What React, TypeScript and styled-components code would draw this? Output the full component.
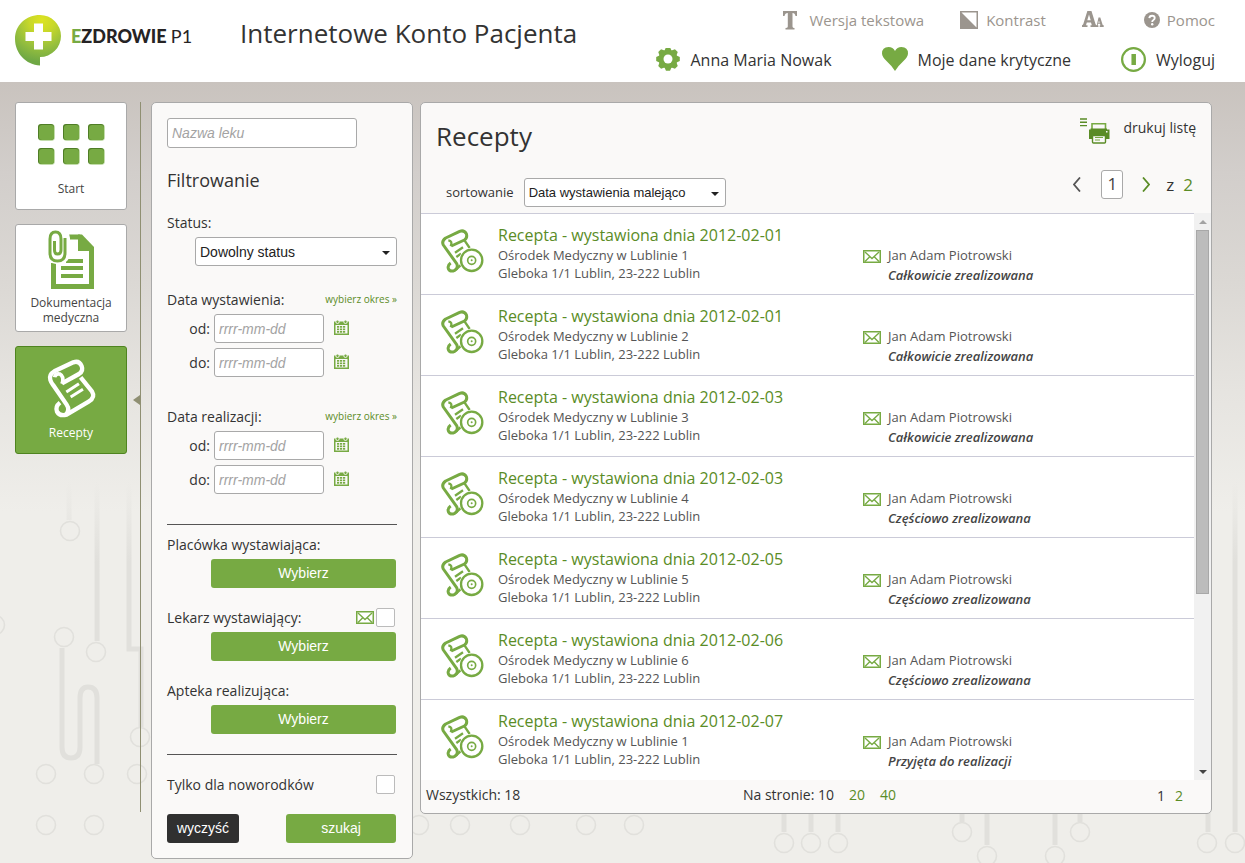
import React, { useState } from "react";
import styled, { createGlobalStyle } from "styled-components";

const GREEN = "#77aa43";
const LINK = "#5a8c26";
const BORDER = "#a9a9a9";
const SANS = `"Open Sans", "Noto Sans", sans-serif`;
const ARIAL = `"Liberation Sans", Arial, sans-serif`;

const GlobalStyle = createGlobalStyle`
  *, *::before, *::after { box-sizing: border-box; }
  body {
    margin: 0;
    background: #efeeea;
    color: #333;
    font-family: ${SANS};
    font-size: 14px;
  }
  a { color: inherit; text-decoration: none; }
  button { cursor: pointer; }
  h1, h2, h3, p, ul { margin: 0; padding: 0; font-weight: 400; }
  ul { list-style: none; }
  svg { display: block; flex: none; }
`;

/* ---------- header ---------- */

const Header = styled.header`
  display: flex;
  height: 82px;
  padding: 0 30px 0 15px;
  background: #fff;
`;

const Brand = styled.a`
  display: flex;
  align-items: center;
  gap: 10px;
  width: 225px;
  height: 80px;
  color: #262324;
  font-size: 18px;
  white-space: nowrap;
`;

const BrandName = styled.span`
  font-family: Lato, sans-serif;
  font-weight: 900;
  padding-bottom: 8px;
  em { font-style: normal; color: ${GREEN}; }
  small { font-size: 18px; font-weight: 400; }
`;

const SiteTitle = styled.h1`
  flex: 1;
  font-size: 26px;
  line-height: 66px;
  white-space: nowrap;
`;

const HeaderLinks = styled.div`
  display: flex;
  flex-direction: column;
  align-items: flex-end;
`;

const TopLinks = styled.nav`
  display: flex;
  height: 40px;
  color: #9b958e;
  font-size: 15px;
  line-height: 40px;
`;

const UserLinks = styled(TopLinks)`
  color: #333;
  font-size: 16px;
`;

const IconLink = styled.a<{ $gap?: number; $before?: number }>`
  display: flex;
  align-items: center;
  gap: ${(p) => p.$gap ?? 10}px;
  margin-left: ${(p) => p.$before ?? 36}px;
  white-space: nowrap;
`;

/* ---------- page ---------- */

const Main = styled.main`
  position: relative;
  display: flex;
  align-items: flex-start;
  gap: 7px;
  min-height: calc(100vh - 82px);
  padding: 20px 33px 4px 15px;
  overflow: hidden;
  background: linear-gradient(#c9c3be, #d2cecb 90px, #dbd8d4 200px, #e6e4e0 310px, #efeeea 430px);
`;

const Backdrop = styled.svg`
  position: absolute;
  top: 0;
  left: 0;
`;

const SideNav = styled.nav`
  position: relative;
  display: flex;
  flex-direction: column;
  gap: 14px;
  width: 126px;
  height: 710px;
  margin-right: 3px;
  border-right: 1px solid #8f8f72;
`;

const Tile = styled.a<{ $active?: boolean }>`
  position: relative;
  width: 112px;
  height: 108px;
  border: 1px solid ${(p) => (p.$active ? "#4f8420" : BORDER)};
  border-radius: 3px;
  background: ${(p) => (p.$active ? GREEN : "#fff")};
  color: ${(p) => (p.$active ? "#fff" : "#444")};
  font-size: 12px;
  line-height: 15px;
  text-align: center;
`;

const TileLabel = styled.span`
  display: flex;
  align-items: center;
  justify-content: center;
  height: 30px;
  padding: 0 10px;
`;

const ActiveMark = styled.span`
  position: absolute;
  top: 48px;
  left: 117px;
  border: 5px solid transparent;
  border-left-width: 0;
  border-right: 7px solid #8f8f72;
`;

const Panel = styled.section`
  position: relative;
  border: 1px solid ${BORDER};
  border-radius: 5px;
  background: #faf9f8;
`;

/* ---------- filters ---------- */

const FilterPanel = styled(Panel)`
  flex: none;
  width: 262px;
  padding: 15px;
`;

const Field = styled.input`
  display: block;
  height: 29px;
  padding: 0 4px;
  border: 1px solid ${BORDER};
  border-radius: 3px;
  background: #fff;
  font: 14px ${ARIAL};
  &::placeholder { color: #a3a3a3; font-style: italic; opacity: 1; }
`;

const DrugField = styled(Field)`
  width: 190px;
  height: 30px;
`;

const FilterTitle = styled.h2`
  margin: 19px 0 16px;
  font-size: 18px;
  line-height: 26px;
`;

const SelectBox = styled.span`
  position: relative;
  display: block;
  width: 202px;
  svg { position: absolute; right: 7px; top: 50%; margin-top: -1px; pointer-events: none; }
`;

const Select = styled.select<{ $size: number }>`
  display: block;
  width: 100%;
  height: 29px;
  padding: 0 4px;
  border: 1px solid ${BORDER};
  border-radius: 3px;
  background: #fff;
  color: #222;
  font: ${(p) => p.$size}px ${ARIAL};
  appearance: none;
`;

const FilterLine = styled.div`
  display: flex;
  align-items: center;
  justify-content: space-between;
  height: 28px;
  padding-bottom: 2px;
  label { flex: 1; }
`;

const NewbornLine = styled(FilterLine)`
  margin-top: 16px;
  padding-right: 1px;
`;

const StatusRow = styled.div`
  display: flex;
  justify-content: flex-end;
  margin-bottom: 20px;
`;

const PeriodLink = styled.a`
  color: ${LINK};
  font-size: 10px;
`;

const DateGroup = styled.div`
  display: flex;
  flex-direction: column;
  gap: 5px;
  margin-bottom: 26px;
`;

const DateRow = styled.div`
  display: flex;
  align-items: center;
  gap: 4px;
  label { width: 43px; text-align: right; }
  input { width: 110px; }
`;

const IconButton = styled.button`
  display: flex;
  margin-left: 6px;
  padding: 0 0 2px;
  border: 0;
  background: none;
`;

const Rule = styled.hr`
  height: 1px;
  margin: 30px 0 6px;
  border: 0;
  background: #555;
`;

const Button = styled.button<{ $width: number; $dark?: boolean }>`
  display: block;
  width: ${(p) => p.$width}px;
  height: 29px;
  padding: 0 0 1px;
  border: 0;
  border-radius: 3px;
  background: ${(p) => (p.$dark ? "#303030" : GREEN)};
  color: #fff;
  font: 14px ${ARIAL};
`;

const Choices = styled.div`
  display: flex;
  flex-direction: column;
  gap: 16px;
  margin-bottom: 20px;
`;

const Choice = styled.div`
  display: flex;
  flex-direction: column;
  align-items: flex-end;
  padding-right: 1px;
  ${FilterLine} { align-self: stretch; }
`;

const Check = styled.input`
  appearance: none;
  width: 19px;
  height: 19px;
  margin: 0 1px 0 2px;
  border: 1px solid #bbb;
  border-radius: 2px;
  background: #fff;
  &:checked { background: ${GREEN}; }
`;

const Actions = styled.div`
  display: flex;
  justify-content: space-between;
  padding: 15px 1px 0 0;
`;

/* ---------- list ---------- */

const ListPanel = styled(Panel)`
  flex: 1;
  min-width: 0;
`;

const ListHead = styled.div`
  display: flex;
  flex-direction: column;
  justify-content: space-between;
  height: 110px;
  padding: 14px 15px 6px;
`;

const HeadRow = styled.div`
  display: flex;
  align-items: flex-start;
  justify-content: space-between;
`;

const SortRow = styled(HeadRow)`
  align-items: flex-end;
`;

const ListTitle = styled.h2`
  font-size: 26px;
  line-height: 38px;
`;

const PrintLink = styled.a`
  display: flex;
  gap: 13px;
  line-height: 22px;
  svg { margin-top: 1px; }
`;

const SortField = styled.div`
  display: flex;
  align-items: center;
  gap: 10px;
  padding-left: 10px;
  font-size: 13px;
  label { padding-bottom: 2px; }
`;

const Pager = styled.div`
  display: flex;
  align-items: center;
  margin-bottom: 8px;
  padding-right: 3px;
  font-size: 17px;
  line-height: 28px;
  a { color: ${LINK}; }
`;

const PageInput = styled.input`
  width: 22px;
  height: 29px;
  margin: 0 19px 0 20px;
  padding: 0 0 2px;
  border: 1px solid ${BORDER};
  border-radius: 3px;
  background: #fff;
  color: #444;
  font: 17px ${SANS};
  text-align: center;
`;

const PageTotal = styled.span`
  margin: 0 9px 0 16px;
`;

const Scroller = styled.div`
  display: flex;
`;

const Rows = styled.ul`
  flex: 1;
  min-width: 0;
  background: #fff;
`;

const Row = styled.li`
  display: flex;
  height: 81px;
  padding: 10px 0 0 20px;
  border-top: 1px solid #cbcbd8;
  color: #555;
  font-size: 13px;
  line-height: 18px;
`;

const RowIcon = styled.div`
  padding-top: 5px;
`;

const RowMain = styled.div`
  flex: 1;
  padding-left: 14px;
`;

const RowTitle = styled.h3`
  color: ${LINK};
  font-size: 16px;
  line-height: 22px;
`;

const RowDoctor = styled.div`
  display: flex;
  gap: 7px;
  width: 331px;
  padding-top: 22px;
  svg { margin-top: 4px; }
  strong { display: block; color: #444; font-weight: 600; font-style: italic; line-height: 22px; }
`;

const Track = styled.div`
  display: flex;
  flex-direction: column;
  align-items: center;
  width: 17px;
  background: #f1f1f1;
`;

const TrackButton = styled.button`
  display: flex;
  align-items: center;
  justify-content: center;
  width: 17px;
  height: 17px;
  padding: 0;
  border: 0;
  background: none;
`;

const Thumb = styled.div`
  width: 13px;
  height: 364px;
  margin-bottom: auto;
  border: 1px solid #a8a8a8;
  background: #bcbcbc;
`;

const ListFoot = styled.footer`
  display: grid;
  grid-template-columns: 1fr auto 1fr;
  height: 33px;
  padding: 0 28px 0 5px;
  line-height: 30px;
  a { color: ${LINK}; }
`;

const PageSizes = styled.div`
  display: flex;
  gap: 15px;
  padding-left: 30px;
`;

const PageLinks = styled.div`
  display: flex;
  justify-content: flex-end;
  gap: 10px;
  line-height: 32px;
`;

/* ---------- drawings ---------- */

const Logo = () => (
  <svg width="46" height="52" viewBox="0 0 46 52" aria-hidden="true">
    <defs>
      <radialGradient id="lg" gradientUnits="userSpaceOnUse" cx="27" cy="6" r="42">
        <stop offset="0" stopColor="#dde321" />
        <stop offset="0.3" stopColor="#c8d829" />
        <stop offset="0.65" stopColor="#98c03d" />
        <stop offset="1" stopColor="#6fa844" />
      </radialGradient>
    </defs>
    <path d="M25 1a21 21 0 0 1 0 42V51.500C11 51 0 39 0 25C0 11 11 1 25 1z" fill="url(#lg)" />
    <path d="M19 9.500h9v8.500h8.500v9H28v8.500h-9V27h-8.500v-9H19z" fill="#fff" />
  </svg>
);

const TextIcon = () => (
  <svg width="16" height="19" viewBox="0 0 16 19" fill="#9b958e" aria-hidden="true">
    <path d="M0 0h14v5h-1.500Q12 2 9.500 2V15.500Q9.500 17 11.500 17V18.500h-9V17Q4.800 17 4.800 15.500V2Q2 2 1.500 5H0z" />
  </svg>
);

const ContrastIcon = () => (
  <svg width="18" height="18" viewBox="0 0 18 18" aria-hidden="true">
    <rect x="0.750" y="0.750" width="16.500" height="16.500" fill="#fff" stroke="#9b958e" strokeWidth="1.500" />
    <path d="M0 0L18 18H0z" fill="#9b958e" />
  </svg>
);

const FontIcon = () => (
  <svg width="22" height="19" viewBox="0 2 22 19" fill="#9b958e" fillRule="evenodd" aria-hidden="true">
    <path d="M5.500 1.500h3.800l4.200 13.500q.3 1 1.200 1.200V18H8.500V16.300h1.300L9 13.500H4.800L4 16.300h1.500v1.700H0V16.300q1-.2 1.300-1.300zM7 5.500L5.300 11.200h3.400z" />
    <path d="M16.500 8.500h1.800l2.400 7.500 1 .3v1.700h-4v-1.500l.7-.2-.4-1.500h-2l-.3 1.500.7.200v1.500H14v-1.500l.8-.3zM17 11.500l-.7 2.200h1.400z" />
  </svg>
);

const HelpIcon = () => (
  <svg width="16" height="16" viewBox="0 0 16 16" fill="none" aria-hidden="true">
    <circle cx="8" cy="8" r="8" fill="#9b958e" />
    <path d="M5.300 6.200Q5.500 3.700 8.100 3.700T10.700 6Q10.700 7.200 9.400 8Q8.200 8.700 8.200 10" stroke="#fff" strokeWidth="1.900" />
    <circle cx="8.200" cy="12.300" r="1.200" fill="#fff" />
  </svg>
);

const GearIcon = () => (
  <svg width="24" height="24" viewBox="-12 -11 24 24" aria-hidden="true">
    {[0, 45, 90, 135].map((a) => (
      <path key={a} d="M-3.500 -8.500L-2 -11.800H2L3.500 -8.500V8.500L2 11.800H-2L-3.500 8.500z" fill={GREEN} transform={`rotate(${a})`} />
    ))}
    <circle r="9.300" fill={GREEN} />
    <circle r="4.500" fill="#fff" />
  </svg>
);

const HeartIcon = () => (
  <svg width="26" height="24" viewBox="0 1 26 24" overflow="visible" fill={GREEN} aria-hidden="true">
    <path d="M13 24Q10 19 5 14.500Q0 10 0 6.500Q0 0 6.500 0Q11 0 13 4Q15 0 19.500 0Q26 0 26 6.500Q26 10 21 14.500Q16 19 13 24z" />
  </svg>
);

const PowerIcon = () => (
  <svg width="25" height="25" viewBox="0 1 25 25" overflow="visible" fill="none" aria-hidden="true">
    <circle cx="12.500" cy="12.500" r="11.400" stroke={GREEN} strokeWidth="2.200" />
    <path d="M12.700 7v11" stroke={GREEN} strokeWidth="4.500" />
  </svg>
);

const StartIcon = () => (
  <svg width="110" height="70" aria-hidden="true">
    {[22, 47, 72].map((x) =>
      [21, 45].map((y) => (
        <g key={`${x}-${y}`}>
          <rect x={x} y={y} width="17" height="17" rx="4" fill="#c2dcaa" />
          <rect x={x} y={y} width="16" height="16" rx="3" fill="#4f7d26" />
          <rect x={x + 1} y={y + 1} width="15" height="15" rx="3" fill={GREEN} />
        </g>
      ))
    )}
  </svg>
);

const DocumentIcon = () => (
  <svg width="110" height="70" fill="none" aria-hidden="true">
    <path d="M53 12H63L75.500 24V61.500H37.500V38" stroke={GREEN} strokeWidth="5" />
    <path d="M62 9.500H66L78 22V26H62z" fill={GREEN} />
    <path d="M45 43H67M45 51H67M50 36H67" stroke={GREEN} strokeWidth="4" />
    <rect x="30" y="3" width="24" height="36" rx="10" fill="#fff" />
    <path d="M49 13V28Q49 36 41.500 36Q34 36 34 28V14Q34 7 39.500 7Q45 7 45 14V25Q45 29 41.500 29Q38.500 29 38.500 25V16" stroke={GREEN} strokeWidth="3" />
  </svg>
);

const ScrollIcon = () => (
  <svg width="110" height="70" overflow="visible" fill="none" stroke="#fff" strokeLinejoin="round" aria-hidden="true">
    <g transform="translate(28 9) scale(0.333)" strokeWidth="13">
      <path d="M54 82L105 54Q119 45 113 30Q106 13 88 19L31 46Q14 56 19 72Q21 79 28 88L68 146Q79 162 66 176" />
      <path d="M54 84Q62 62 47 54Q34 52 32 64" strokeWidth="11" />
      <path d="M48 140Q33 152 39 167Q47 182 68 176L134 137Q155 124 144 106L110 64" />
      <path d="M67 108L105 83M80 123L117 100" strokeWidth="9" />
    </g>
  </svg>
);

const RecipeIcon = () => (
  <svg width="43" height="44" viewBox="0 0 129 132" fill="none" stroke={GREEN} strokeLinejoin="round" aria-hidden="true">
    <path d="M31 51L70 33Q80 27 76 14Q69 2 56 7L14 27Q1 36 7 48L47 104Q53 118 41 124Q28 130 22 119Q19 109 29 102" strokeWidth="9" />
    <path d="M29 52Q36 36 22 34" strokeWidth="7" />
    <path d="M71 35L86 57M42 71L66 55M46 84L60 74M44 122L60 108" strokeWidth="7" />
    <circle cx="92" cy="94" r="37" fill="#fff" stroke="none" />
    <circle cx="92" cy="94" r="32" strokeWidth="7" />
    <circle cx="92" cy="94" r="12" strokeWidth="5" />
    <circle cx="92" cy="94" r="3" fill={GREEN} stroke="none" />
  </svg>
);

const MailIcon = () => (
  <svg width="18" height="13" viewBox="0 0 18 13" fill="none" stroke={GREEN} aria-hidden="true">
    <rect x="0.750" y="0.750" width="16.500" height="11.500" fill="#fff" strokeWidth="1.500" />
    <path d="M2 2L9 8.500L16 2M2 11.500L6.500 7M16 11.500L11.500 7" strokeWidth="1.400" />
  </svg>
);

const CalendarIcon = () => (
  <svg width="15" height="15" viewBox="0 0 15 15" aria-hidden="true">
    <path d="M0 1.500H15V15H0z" fill={GREEN} />
    <path d="M1.500 5H13.500V13.500H1.500z" fill="#faf9f8" />
    <circle cx="3.500" cy="1.800" r="1.700" fill={GREEN} stroke="#faf9f8" strokeWidth="0.900" />
    <circle cx="11.500" cy="1.800" r="1.700" fill={GREEN} stroke="#faf9f8" strokeWidth="0.900" />
    {[3, 6, 9].map((x) => [6, 8.500, 11].map((y) => <rect key={`${x}${y}`} x={x} y={y} width="2.200" height="1.700" fill={GREEN} />))}
  </svg>
);

const PrinterIcon = () => (
  <svg width="30" height="26" viewBox="0 0 30 26" fill="none" aria-hidden="true">
    <path d="M0 1H7M0 4.300H7M0 7.600H7" stroke={LINK} strokeWidth="1.400" />
    <path d="M12 12V5.700H25.500V12" stroke={GREEN} strokeWidth="1.600" />
    <path d="M9 11.500h1.500v-1h16.500v1h2.500V21H9z" fill={LINK} />
    <rect x="12.500" y="17.500" width="13" height="7.500" rx="1" fill="#faf9f8" stroke={LINK} strokeWidth="1.400" />
    <path d="M15 19.500h8M15 22h5" stroke={GREEN} strokeWidth="1.200" />
    <rect x="26" y="13" width="1.500" height="1.500" fill="#faf9f8" />
  </svg>
);

const CaretIcon = ({ up, color = "#222" }: { up?: boolean; color?: string }) => (
  <svg width="8" height="4" viewBox="0 0 8 4" aria-hidden="true">
    <path d={up ? "M0 4L4 0L8 4z" : "M0 0H8L4 4z"} fill={color} />
  </svg>
);

const Chevron = ({ right }: { right?: boolean }) => (
  <svg width="8" height="15" viewBox="0 0 8 15" fill="none" aria-hidden="true">
    <path d={right ? "M1 0.500L7 7.500L1 14.500" : "M7 0.500L1 7.500L7 14.500"} stroke={right ? LINK : "#555"} strokeWidth="1.800" />
  </svg>
);

const RINGS = [
  [70, 449], [-5, 543], [64, 555], [96, 570], [140, 655], [46, 692], [94, 692], [137, 692],
  [46, 743], [94, 743], [419, 743], [460, 743], [520, 743], [586, 743], [634, 743],
  [784, 761], [811, 761], [838, 761], [962, 750], [987, 774], [1055, 774], [1080, 750], [1207, 761], [1235, 761],
];

const Circuit = () => (
  <Backdrop width="100%" height="781" fill="none" stroke="#e1e0dc" aria-hidden="true">
    <defs>
      <linearGradient id="fade" gradientUnits="userSpaceOnUse" x1="0" y1="400" x2="0" y2="480">
        <stop offset="0" stopColor="#e1e0dc" stopOpacity="0" />
        <stop offset="1" stopColor="#e1e0dc" />
      </linearGradient>
    </defs>
    <g strokeWidth="5">
      <path stroke="url(#fade)" d="M97 400L97.100 559M129 400V567H141V645M69 400L69.100 438M1235 400L1235.100 750" />
      <path d="M62 566V665Q62 676 71 676Q80 676 80 665V616Q80 605 88 605Q97 605 97 616V682" />
      <path d="M784 730V750M811 730V750M838 730V750M962 730V740M987 730V763M1055 730V763M1080 730V740M1208 730V750" />
    </g>
    {RINGS.map(([x, y]) => (
      <circle key={`${x}-${y}`} cx={x} cy={y} r="9.500" strokeWidth="1.600" fill="#efeeea" />
    ))}
  </Backdrop>
);

/* ---------- page parts ---------- */

const ROWS = [
  ["2012-02-01", "1", "Całkowicie zrealizowana"],
  ["2012-02-01", "2", "Całkowicie zrealizowana"],
  ["2012-02-03", "3", "Całkowicie zrealizowana"],
  ["2012-02-03", "4", "Częściowo zrealizowana"],
  ["2012-02-05", "5", "Częściowo zrealizowana"],
  ["2012-02-06", "6", "Częściowo zrealizowana"],
  ["2012-02-07", "1", "Przyjęta do realizacji"],
];

const DateRange = ({ id, title }: { id: string; title: string }) => (
  <>
    <FilterLine>
      <span>{title}</span>
      <PeriodLink href="#okres">wybierz okres »</PeriodLink>
    </FilterLine>
    <DateGroup>
      {["od", "do"].map((edge) => (
        <DateRow key={edge}>
          <label htmlFor={`${id}-${edge}`}>{edge}:</label>
          <Field id={`${id}-${edge}`} placeholder="rrrr-mm-dd" />
          <IconButton type="button" aria-label="Kalendarz">
            <CalendarIcon />
          </IconButton>
        </DateRow>
      ))}
    </DateGroup>
  </>
);

const Filters = () => (
  <FilterPanel as="form" onSubmit={(e: React.FormEvent) => e.preventDefault()}>
    <DrugField aria-label="Nazwa leku" placeholder="Nazwa leku" />
    <FilterTitle>Filtrowanie</FilterTitle>
    <FilterLine>
      <label htmlFor="status">Status:</label>
    </FilterLine>
    <StatusRow>
      <SelectBox>
        <Select id="status" $size={14}>
          <option>Dowolny status</option>
        </Select>
        <CaretIcon />
      </SelectBox>
    </StatusRow>
    <DateRange id="wystawienie" title="Data wystawienia:" />
    <DateRange id="realizacja" title="Data realizacji:" />
    <Rule />
    <Choices>
      <Choice>
        <FilterLine>
          <span>Placówka wystawiająca:</span>
        </FilterLine>
        <Button type="button" $width={185}>Wybierz</Button>
      </Choice>
      <Choice>
        <FilterLine>
          <label htmlFor="lekarz">Lekarz wystawiający:</label>
          <MailIcon />
          <Check id="lekarz" type="checkbox" />
        </FilterLine>
        <Button type="button" $width={185}>Wybierz</Button>
      </Choice>
      <Choice>
        <FilterLine>
          <span>Apteka realizująca:</span>
        </FilterLine>
        <Button type="button" $width={185}>Wybierz</Button>
      </Choice>
    </Choices>
    <RuleTight />
    <NewbornLine>
      <label htmlFor="noworodki">Tylko dla noworodków</label>
      <Check id="noworodki" type="checkbox" />
    </NewbornLine>
    <Actions>
      <Button type="reset" $width={72} $dark>wyczyść</Button>
      <Button type="submit" $width={110}>szukaj</Button>
    </Actions>
  </FilterPanel>
);

const RuleTight = styled(Rule)`
  margin-top: 0;
`;

const Prescriptions = () => {
  const [page, setPage] = useState("1");
  return (
    <ListPanel>
      <ListHead>
        <HeadRow>
          <ListTitle>Recepty</ListTitle>
          <PrintLink href="#drukuj">
            <PrinterIcon />
            drukuj listę
          </PrintLink>
        </HeadRow>
        <SortRow>
          <SortField>
            <label htmlFor="sort">sortowanie</label>
            <SelectBox>
              <Select id="sort" $size={13}>
                <option>Data wystawienia malejąco</option>
              </Select>
              <CaretIcon />
            </SelectBox>
          </SortField>
          <Pager>
            <Chevron />
            <PageInput aria-label="Strona" value={page} onChange={(e) => setPage(e.target.value)} />
            <Chevron right />
            <PageTotal>z</PageTotal>
            <a href="#2">2</a>
          </Pager>
        </SortRow>
      </ListHead>
      <Scroller>
        <Rows>
          {ROWS.map(([date, no, state], i) => (
            <Row key={i}>
              <RowIcon>
                <RecipeIcon />
              </RowIcon>
              <RowMain>
                <RowTitle>
                  <a href="#recepta">Recepta - wystawiona dnia {date}</a>
                </RowTitle>
                <p>Ośrodek Medyczny w Lublinie {no}</p>
                <p>Gleboka 1/1 Lublin, 23-222 Lublin</p>
              </RowMain>
              <RowDoctor>
                <MailIcon />
                <p>
                  Jan Adam Piotrowski
                  <strong>{state}</strong>
                </p>
              </RowDoctor>
            </Row>
          ))}
        </Rows>
        <Track>
          <TrackButton aria-label="W górę"><CaretIcon up color="#a3a3a3" /></TrackButton>
          <Thumb />
          <TrackButton aria-label="W dół"><CaretIcon color="#444" /></TrackButton>
        </Track>
      </Scroller>
      <ListFoot>
        <span>Wszystkich: 18</span>
        <PageSizes>
          <span>Na stronie: 10</span>
          <a href="#20">20</a>
          <a href="#40">40</a>
        </PageSizes>
        <PageLinks>
          <span>1</span>
          <a href="#2">2</a>
        </PageLinks>
      </ListFoot>
    </ListPanel>
  );
};

export default function App() {
  return (
    <>
      <GlobalStyle />
      <Header>
        <Brand href="#start">
          <Logo />
          <BrandName>
            <em>E</em>ZDROWIE <small>P1</small>
          </BrandName>
        </Brand>
        <SiteTitle>Internetowe Konto Pacjenta</SiteTitle>
        <HeaderLinks>
          <TopLinks>
            <IconLink href="#tekst"><TextIcon />Wersja tekstowa</IconLink>
            <IconLink href="#kontrast" $gap={8}><ContrastIcon />Kontrast</IconLink>
            <IconLink href="#czcionka" aria-label="Rozmiar czcionki"><FontIcon /></IconLink>
            <IconLink href="#pomoc" $gap={7} $before={40}><HelpIcon />Pomoc</IconLink>
          </TopLinks>
          <UserLinks>
            <IconLink href="#konto"><GearIcon />Anna Maria Nowak</IconLink>
            <IconLink href="#dane" $before={50}><HeartIcon />Moje dane krytyczne</IconLink>
            <IconLink href="#wyloguj" $before={50}><PowerIcon />Wyloguj</IconLink>
          </UserLinks>
        </HeaderLinks>
      </Header>
      <Main>
        <Circuit />
        <SideNav>
          <Tile href="#start"><StartIcon /><TileLabel>Start</TileLabel></Tile>
          <Tile href="#dokumentacja"><DocumentIcon /><TileLabel>Dokumentacja medyczna</TileLabel></Tile>
          <Tile href="#recepty" $active>
            <ScrollIcon />
            <TileLabel>Recepty</TileLabel>
            <ActiveMark />
          </Tile>
        </SideNav>
        <Filters />
        <Prescriptions />
      </Main>
    </>
  );
}
